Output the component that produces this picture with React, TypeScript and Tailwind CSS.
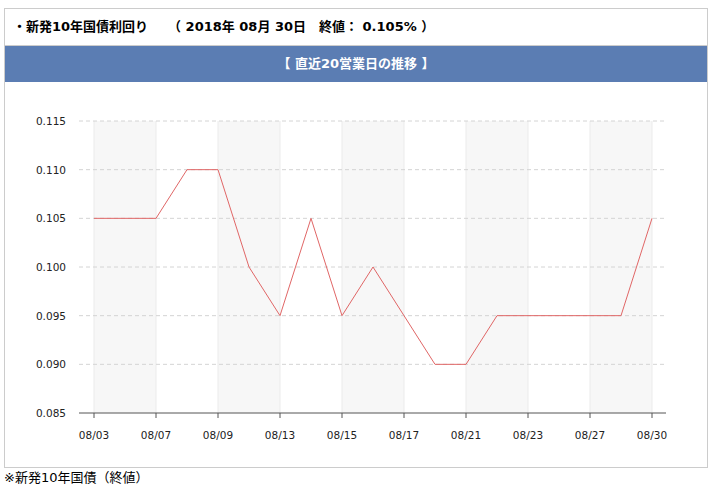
import React from 'react';

const values = [0.105, 0.105, 0.105, 0.11, 0.11, 0.1, 0.095, 0.105, 0.095, 0.1, 0.095, 0.09, 0.09, 0.095, 0.095, 0.095, 0.095, 0.095, 0.105];
const labels = ['08/03', '08/07', '08/09', '08/13', '08/15', '08/17', '08/21', '08/23', '08/27', '08/30'];
const yTicks = [0.115, 0.11, 0.105, 0.1, 0.095, 0.09, 0.085];

const X0 = 89;
const STEP = 31;
const yOf = (v: number) => 413 - ((v - 0.085) / 0.03) * 292 - 82;

const App = () => {
  const pts = values.map((v, i) => `${X0 + i * STEP},${yOf(v)}`).join(' ');
  return (
    <div className="w-[712px] h-[491px] bg-white pt-2 pl-1" style={{ fontFamily: '"DejaVu Sans", "Noto Sans CJK JP", sans-serif' }}>
      <div className="w-[704px] h-[460px] border border-[#cccccc] flex flex-col">
        <div className="h-[37px] flex items-center pl-2 text-[13px] font-bold text-black border-b border-[#cccccc]">
          <span>・新発10年国債利回り</span>
          <span className="ml-[20px]">（ 2018年 08月 30日　終値： 0.105% ）</span>
        </div>
        <div className="h-[36px] bg-[#5b7db3] text-white font-bold text-[13px] flex items-center justify-center">
          【 直近20営業日の推移 】
        </div>
        <svg width="702" height="385" className="block" fontFamily='"DejaVu Sans", sans-serif' fontSize="10.5">
          {labels.map((_, i) =>
            i % 2 === 0 && i < 9 ? (
              <rect key={i} x={X0 + i * 62} y={yOf(0.115)} width={62} height={292} fill="#f7f7f7" />
            ) : null
          )}
          {labels.map((_, i) => (
            <line key={i} x1={X0 + i * 62} x2={X0 + i * 62} y1={yOf(0.115)} y2={yOf(0.085)} stroke="#ebebeb" />
          ))}
          {yTicks.map((t) => (
            <g key={t}>
              {t !== 0.085 && (
                <line x1={74} x2={661} y1={yOf(t)} y2={yOf(t)} stroke="#d4d4d4" strokeDasharray="4 3" />
              )}
              <text x={61} y={yOf(t) + 4} textAnchor="end" fill="#222">
                {t.toFixed(3)}
              </text>
            </g>
          ))}
          <line x1={74} x2={661} y1={yOf(0.085)} y2={yOf(0.085)} stroke="#555" />
          {labels.map((l, i) => (
            <g key={l}>
              <line x1={X0 + i * 62} x2={X0 + i * 62} y1={yOf(0.085)} y2={yOf(0.085) + 5} stroke="#555" />
              <text x={X0 + i * 62} y={yOf(0.085) + 26} textAnchor="middle" fill="#222">
                {l}
              </text>
            </g>
          ))}
          <polyline points={pts} fill="none" stroke="#e06666" strokeWidth="1" />
        </svg>
      </div>
      <div className="text-[13px] text-black leading-[20px] -ml-1 pl-[4px]">※新発10年国債（終値）</div>
    </div>
  );
};

export default App;
